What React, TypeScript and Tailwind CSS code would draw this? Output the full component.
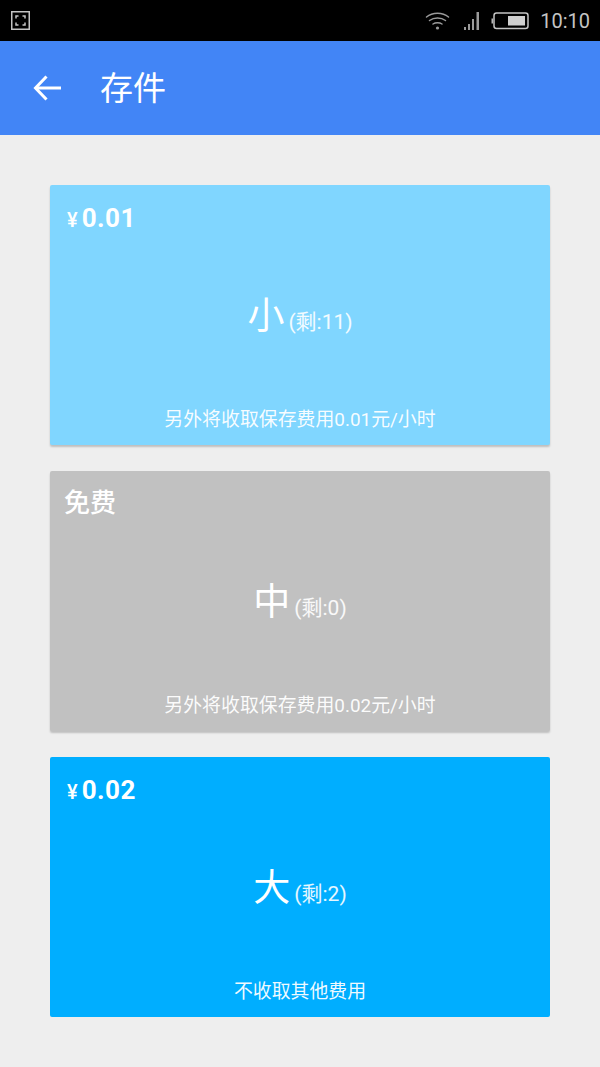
const cards = [
  { price: '0.01', size: '小', left: 11, note: '另外将收取保存费用0.01元/小时', bg: 'bg-[#80d6ff]', shadow: 'shadow-[0_2px_2px_rgba(0,0,0,0.2)]' },
  { price: null, size: '中', left: 0, note: '另外将收取保存费用0.02元/小时', bg: 'bg-[#c1c1c1]', shadow: 'shadow-[0_2px_2px_rgba(0,0,0,0.2)]' },
  { price: '0.02', size: '大', left: 2, note: '不收取其他费用', bg: 'bg-[#00aeff]', shadow: '' },
];

function StatusBar() {
  return (
    <div className="h-[41px] bg-black flex items-center justify-between pl-[11px] pr-[10px]">
      <svg width="19" height="19" viewBox="0 0 19 19" fill="none" stroke="#c4c4c4" className="-mt-[1px]">
        <rect x="0.75" y="0.75" width="17.5" height="17.5" strokeWidth="1.5" />
        <path d="M5 7.5V5H7.5M11.5 5H14V7.5M14 11.5V14H11.5M7.5 14H5V11.5" strokeWidth="1.5" />
      </svg>
      <div className="flex items-center">
        <svg width="25" height="20" viewBox="0 0 25 20" fill="none" stroke="#9a9a9a" strokeWidth="1.5" strokeLinecap="round">
          <path d="M1.5 6C7.5 1 17.5 1 23.5 6" />
          <path d="M4.5 9.5C9 6 16 6 20.5 9.5" />
          <path d="M8 13C10.5 11.2 14.5 11.2 17 13" />
          <circle cx="12.5" cy="17" r="1.6" fill="#9a9a9a" stroke="none" />
        </svg>
        <svg width="16" height="19" viewBox="0 0 16 19" fill="#9a9a9a" className="ml-[14px]">
          <rect x="0" y="16" width="2" height="3" />
          <rect x="4" y="13" width="2" height="6" />
          <rect x="8" y="8" width="2" height="11" />
          <rect x="12.5" y="1" width="2.5" height="18" />
        </svg>
        <svg width="38" height="18" viewBox="0 0 38 18" fill="none" className="ml-[11px]">
          <path d="M0.5 6.5H2V11.5H0.5Z" fill="#b8b8b8" />
          <rect x="3" y="1" width="34" height="15.5" rx="2.5" stroke="#c4c4c4" strokeWidth="1.5" />
          <rect x="17" y="4" width="17" height="9.5" fill="#d0d0d0" />
        </svg>
        <span className="ml-[11px] text-[20px] leading-none text-[#c4c4c4] font-['Roboto',sans-serif]">10:10</span>
      </div>
    </div>
  );
}

function Card({ price, size, left, note, bg, shadow }: (typeof cards)[number]) {
  return (
    <div className={`h-[260px] rounded-[2px] flex flex-col text-white ${bg} ${shadow}`}>
      <div className="h-[66px] pl-[15px] pt-[15px]">
        {price ? (
          <div className="flex items-baseline leading-[36px] pl-[2px]">
            <span className="text-[20px] font-medium mr-[4px]">¥</span>
            <span className="text-[26px] font-bold tracking-[0.5px]">{price}</span>
          </div>
        ) : (
          <div className="-ml-[1px] -mt-[1px] text-[26px] font-medium leading-[36px]">免费</div>
        )}
      </div>
      <div className="flex-1 flex items-end justify-center pb-[69px]">
        <span className="text-[37px] leading-[42px]">{size}</span>
        <span className="ml-[4px] text-[21px] leading-[32px] text-white/90">(剩:{left})</span>
      </div>
      <div className="h-[38px] text-center text-[18.9px] leading-[26px] text-white/95">{note}</div>
    </div>
  );
}

export default function App() {
  return (
    <div className="w-[600px] h-[1067px] bg-[#eeeeee] font-['Roboto','Noto_Sans_CJK_SC',sans-serif]">
      <StatusBar />
      <div className="h-[94px] bg-[#4285f6] flex items-center pl-[33px] text-white">
        <svg width="28" height="26" viewBox="0 0 28 26" fill="none" stroke="white" strokeWidth="3">
          <path d="M28 13H3" />
          <path d="M13.5 1.5L2.5 13L13.5 24.5" />
        </svg>
        <span className="ml-[39px] text-[33px] leading-none">存件</span>
      </div>
      <div className="px-[50px] pt-[50px] flex flex-col gap-[26px]">
        {cards.map((c) => (
          <Card key={c.size} {...c} />
        ))}
      </div>
    </div>
  );
}
